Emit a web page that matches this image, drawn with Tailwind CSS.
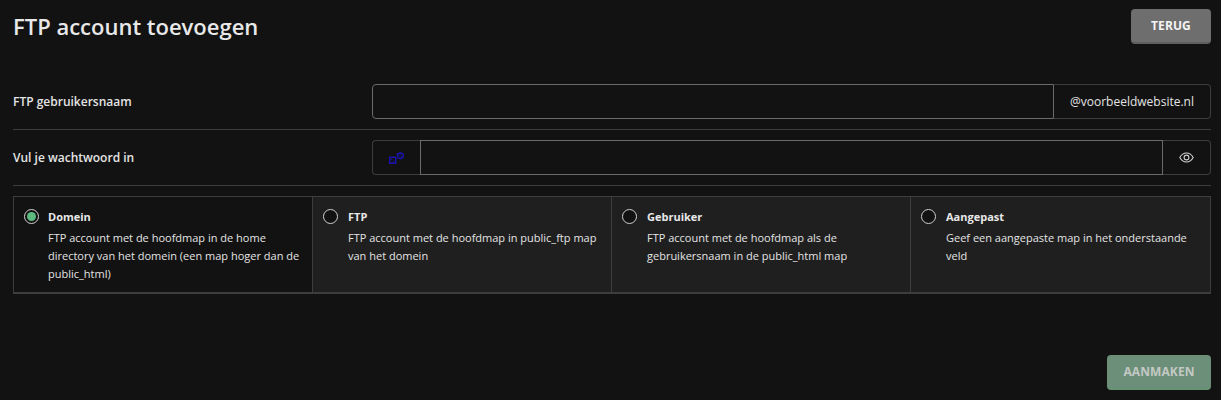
<!DOCTYPE html>
<html lang="nl">
<head>
    <meta charset="UTF-8">
    <meta name="viewport" content="width=device-width, initial-scale=1.0">
    <title>FTP account toevoegen</title>
    <script src="https://cdn.jsdelivr.net/npm/@tailwindcss/browser@4"></script>
</head>

<body class="bg-[#121212] h-[400px] overflow-hidden font-['Open_Sans',sans-serif] text-[#e4e4e4]">
    <div class="h-[400px] pl-[13px] pr-[10px] pt-[9px] flex flex-col">

        <!-- Header -->
        <div class="flex items-start justify-between h-[35px]">
            <h1 class="text-[22px] leading-[35px] font-semibold text-[#e8e8e8]">FTP account toevoegen</h1>
            <button class="w-[80px] h-[35px] rounded-[4px] bg-[#6e6e6e] border-b-2 border-[#5f5f5f] text-[12px] tracking-[0.1px] font-bold text-[#f4f4f4]">TERUG</button>
        </div>

        <!-- Gebruikersnaam -->
        <div class="mt-[40px] pb-[10px] border-b border-[#3d3d3d] flex items-center">
            <label class="w-[359px] text-[12px] font-semibold text-[#e4e4e4]">FTP gebruikersnaam</label>
            <div class="flex-1 flex h-[35px]">
                <input type="text" class="flex-1 min-w-0 bg-transparent border border-[#6a6a6a] rounded-l-[4px] outline-none">
                <span class="w-[157px] flex items-center justify-center border border-l-0 border-[#3d3d3d] rounded-r-[4px] text-[12px] text-[#e4e4e4]">@voorbeeldwebsite.nl</span>
            </div>
        </div>

        <!-- Wachtwoord -->
        <div class="mt-[10px] pb-[10px] border-b border-[#3d3d3d] flex items-center">
            <label class="w-[359px] text-[12px] font-semibold text-[#e4e4e4]">Vul je wachtwoord in</label>
            <div class="flex-1 flex h-[35px]">
                <span class="w-[48px] flex items-center justify-center border border-r-0 border-[#3d3d3d] rounded-l-[4px]">
                    <svg width="15" height="12" viewBox="0 0 15 12" fill="none" stroke="#1a14b4" stroke-width="1.4">
                        <rect x="0.7" y="5.300" width="6" height="6" />
                        <path d="M8.300 2.200 11 .8l3 1 .4 2.800-2.400 2.200-3-.8z" />
                        <path d="M2.200 7.500h1M4.200 9.500h1M10.500 2.800h1M11.800 4.800h1" />
                    </svg>
                </span>
                <input type="password" class="flex-1 min-w-0 bg-transparent border border-[#6a6a6a] outline-none">
                <span class="w-[48px] flex items-center justify-center border border-l-0 border-[#3d3d3d] rounded-r-[4px]">
                    <svg width="15" height="11" viewBox="0 0 15 11" fill="none" stroke="#d0d0d0" stroke-width="1.1">
                        <path d="M.8 5.500C2.400 2.600 4.700 1 7.500 1s5.100 1.600 6.700 4.500C12.600 8.400 10.300 10 7.500 10S2.400 8.400.8 5.500z" />
                        <circle cx="7.500" cy="5.500" r="2.400" />
                    </svg>
                </span>
            </div>
        </div>

        <!-- Map opties -->
        <div class="mt-[10px] h-[98px] grid grid-cols-[298px_299px_299px_1fr] border border-[#3d3d3d] border-b-2">
            <div class="flex gap-[9px] pl-[10px] pr-[8px] pt-[11px]">
                <span class="mt-[1px] w-[15px] h-[15px] shrink-0 rounded-full border border-[#d0d0d0] flex items-center justify-center">
                    <span class="w-[9px] h-[9px] rounded-full bg-[#5cb97f]"></span>
                </span>
                <div>
                    <div class="text-[11px] leading-[18px] font-bold text-[#e8e8e8]">Domein</div>
                    <p class="mt-[3px] text-[11px] leading-[18px] text-[#e4e4e4]">FTP account met de hoofdmap in de home directory van het domein (een map hoger dan de public_html)</p>
                </div>
            </div>
            <div class="flex gap-[10px] pl-[10px] pr-[8px] pt-[11px] bg-[#1f1f1f] border-l border-[#3d3d3d]">
                <span class="mt-[1px] w-[15px] h-[15px] shrink-0 rounded-full border border-[#d0d0d0] bg-[#121212]"></span>
                <div>
                    <div class="text-[11px] leading-[18px] font-bold text-[#e8e8e8]">FTP</div>
                    <p class="mt-[3px] text-[11px] leading-[18px] text-[#e4e4e4]">FTP account met de hoofdmap in public_ftp map van het domein</p>
                </div>
            </div>
            <div class="flex gap-[10px] pl-[10px] pr-[8px] pt-[11px] bg-[#1f1f1f] border-l border-[#3d3d3d]">
                <span class="mt-[1px] w-[15px] h-[15px] shrink-0 rounded-full border border-[#d0d0d0] bg-[#121212]"></span>
                <div>
                    <div class="text-[11px] leading-[18px] font-bold text-[#e8e8e8]">Gebruiker</div>
                    <p class="mt-[3px] text-[11px] leading-[18px] text-[#e4e4e4]">FTP account met de hoofdmap als de gebruikersnaam in de public_html map</p>
                </div>
            </div>
            <div class="flex gap-[10px] pl-[10px] pr-[8px] pt-[11px] bg-[#1f1f1f] border-l border-[#3d3d3d]">
                <span class="mt-[1px] w-[15px] h-[15px] shrink-0 rounded-full border border-[#d0d0d0] bg-[#121212]"></span>
                <div>
                    <div class="text-[11px] leading-[18px] font-bold text-[#e8e8e8]">Aangepast</div>
                    <p class="mt-[3px] text-[11px] leading-[18px] text-[#e4e4e4]">Geef een aangepaste map in het onderstaande veld</p>
                </div>
            </div>
        </div>

        <!-- Footer -->
        <div class="mt-[61px] flex justify-end">
            <button class="w-[104px] h-[35px] rounded-[4px] bg-[#6b8f78] border-b-2 border-[#659472] text-[12px] tracking-[0.1px] font-bold text-[#c4c8c5]">AANMAKEN</button>
        </div>
    </div>
</body>
</html>
